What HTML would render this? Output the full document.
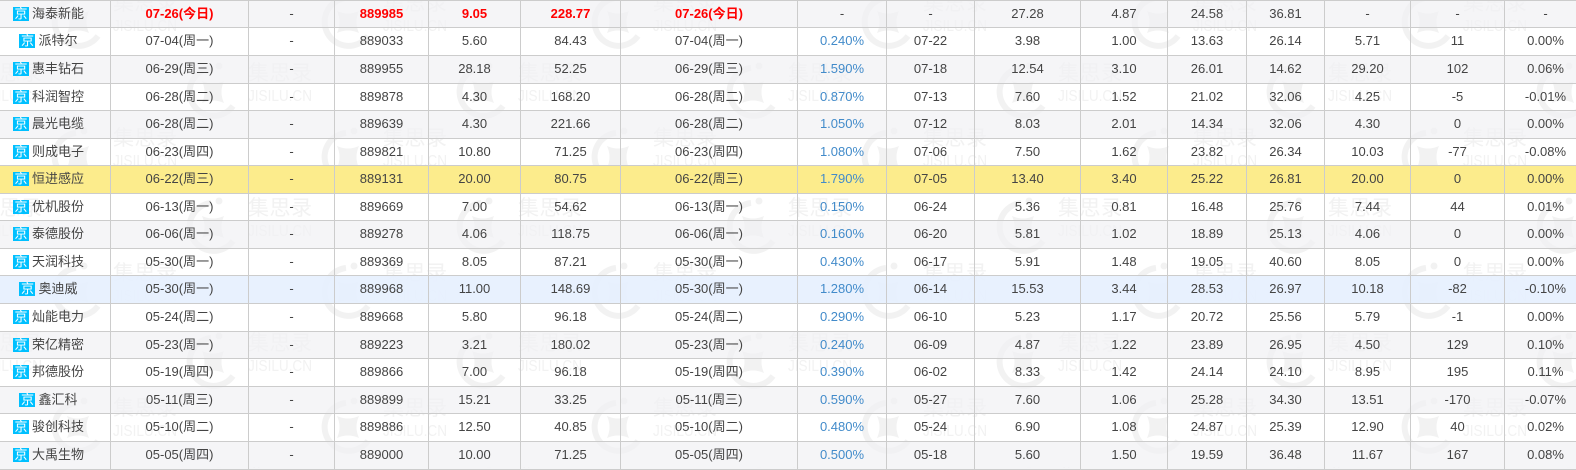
<!DOCTYPE html>
<html lang="zh-CN">
<head>
<meta charset="utf-8">
<title>集思录</title>
<style>
html,body{margin:0;padding:0;width:1576px;height:468px;overflow:hidden;background:#fff}
svg.wm{position:absolute;left:0;top:0;z-index:0}
table{position:absolute;left:-14px;top:0;z-index:1;width:1600px;border-collapse:collapse;table-layout:fixed;font-family:"Liberation Sans","Noto Sans CJK SC",sans-serif;font-size:13px;color:#444}
td{border:1px solid #ccc;padding:0 0 1px 0;text-align:center;white-space:nowrap;overflow:hidden;line-height:16px}
tr.g{background:rgba(241,241,244,.7)}
tr.y{background:#fcec8c}
tr.b{background:rgba(230,240,254,.92)}
tr.r td.h{color:#f00;font-weight:bold}
td.p{color:#428bca}
i{display:inline-block;width:16px;height:14px;line-height:14px;margin-right:3px;background:#00c0ff;color:#fff;font-style:normal;text-align:center;vertical-align:0}
</style>
</head>
<body>
<svg class="wm" width="1576" height="468" xmlns="http://www.w3.org/2000/svg">
<defs>
<pattern id="p" patternUnits="userSpaceOnUse" width="270" height="135" patternTransform="translate(45,-10)">
<g transform="translate(168,102)" fill="#f2f2f2" stroke="none">
<path d="M-2,-24 A24,24 0 1 0 20,14" fill="none" stroke="#f2f2f2" stroke-width="6"/>
<circle cx="6" cy="-26" r="3.5"/>
<path d="M-11,-11 Q0,-6 11,-11 Q6,0 11,11 Q0,6 -11,11 Q-6,0 -11,-11Z"/>
<text x="35" y="-12" font-family="'Noto Sans CJK SC',sans-serif" font-size="21" textLength="64">集思录</text>
<text x="35" y="9" font-family="'Liberation Sans',sans-serif" font-size="16" textLength="64" lengthAdjust="spacingAndGlyphs">JISILU.CN</text>
</g>
<g transform="translate(33,32)" fill="#f2f2f2" stroke="none">
<path d="M-2,-24 A24,24 0 1 0 20,14" fill="none" stroke="#f2f2f2" stroke-width="6"/>
<circle cx="6" cy="-26" r="3.5"/>
<path d="M-11,-11 Q0,-6 11,-11 Q6,0 11,11 Q0,6 -11,11 Q-6,0 -11,-11Z"/>
<text x="35" y="-12" font-family="'Noto Sans CJK SC',sans-serif" font-size="21" textLength="64">集思录</text>
<text x="35" y="9" font-family="'Liberation Sans',sans-serif" font-size="16" textLength="64" lengthAdjust="spacingAndGlyphs">JISILU.CN</text>
</g>
</pattern>
</defs>
<rect width="1576" height="468" fill="url(#p)"/>
</svg>
<table>
<colgroup>
<col style="width:124px"><col style="width:138px"><col style="width:86px"><col style="width:94px"><col style="width:92px"><col style="width:100px"><col style="width:177px"><col style="width:89px"><col style="width:88px"><col style="width:106px"><col style="width:87px"><col style="width:79px"><col style="width:78px"><col style="width:86px"><col style="width:94px"><col style="width:82px">
</colgroup>
<tr class="g r" style="height:27px"><td><i>京</i>海泰新能</td><td class="h">07-26(今日)</td><td>-</td><td class="h">889985</td><td class="h">9.05</td><td class="h">228.77</td><td class="h">07-26(今日)</td><td>-</td><td>-</td><td>27.28</td><td>4.87</td><td>24.58</td><td>36.81</td><td>-</td><td>-</td><td>-</td></tr>
<tr style="height:28px"><td><i>京</i>派特尔</td><td>07-04(周一)</td><td>-</td><td>889033</td><td>5.60</td><td>84.43</td><td>07-04(周一)</td><td class="p">0.240%</td><td>07-22</td><td>3.98</td><td>1.00</td><td>13.63</td><td>26.14</td><td>5.71</td><td>11</td><td>0.00%</td></tr>
<tr class="g" style="height:28px"><td><i>京</i>惠丰钻石</td><td>06-29(周三)</td><td>-</td><td>889955</td><td>28.18</td><td>52.25</td><td>06-29(周三)</td><td class="p">1.590%</td><td>07-18</td><td>12.54</td><td>3.10</td><td>26.01</td><td>14.62</td><td>29.20</td><td>102</td><td>0.06%</td></tr>
<tr style="height:27px"><td><i>京</i>科润智控</td><td>06-28(周二)</td><td>-</td><td>889878</td><td>4.30</td><td>168.20</td><td>06-28(周二)</td><td class="p">0.870%</td><td>07-13</td><td>7.60</td><td>1.52</td><td>21.02</td><td>32.06</td><td>4.25</td><td>-5</td><td>-0.01%</td></tr>
<tr class="g" style="height:28px"><td><i>京</i>晨光电缆</td><td>06-28(周二)</td><td>-</td><td>889639</td><td>4.30</td><td>221.66</td><td>06-28(周二)</td><td class="p">1.050%</td><td>07-12</td><td>8.03</td><td>2.01</td><td>14.34</td><td>32.06</td><td>4.30</td><td>0</td><td>0.00%</td></tr>
<tr style="height:27px"><td><i>京</i>则成电子</td><td>06-23(周四)</td><td>-</td><td>889821</td><td>10.80</td><td>71.25</td><td>06-23(周四)</td><td class="p">1.080%</td><td>07-06</td><td>7.50</td><td>1.62</td><td>23.82</td><td>26.34</td><td>10.03</td><td>-77</td><td>-0.08%</td></tr>
<tr class="y" style="height:28px"><td><i>京</i>恒进感应</td><td>06-22(周三)</td><td>-</td><td>889131</td><td>20.00</td><td>80.75</td><td>06-22(周三)</td><td class="p">1.790%</td><td>07-05</td><td>13.40</td><td>3.40</td><td>25.22</td><td>26.81</td><td>20.00</td><td>0</td><td>0.00%</td></tr>
<tr style="height:27px"><td><i>京</i>优机股份</td><td>06-13(周一)</td><td>-</td><td>889669</td><td>7.00</td><td>54.62</td><td>06-13(周一)</td><td class="p">0.150%</td><td>06-24</td><td>5.36</td><td>0.81</td><td>16.48</td><td>25.76</td><td>7.44</td><td>44</td><td>0.01%</td></tr>
<tr class="g" style="height:28px"><td><i>京</i>泰德股份</td><td>06-06(周一)</td><td>-</td><td>889278</td><td>4.06</td><td>118.75</td><td>06-06(周一)</td><td class="p">0.160%</td><td>06-20</td><td>5.81</td><td>1.02</td><td>18.89</td><td>25.13</td><td>4.06</td><td>0</td><td>0.00%</td></tr>
<tr style="height:27px"><td><i>京</i>天润科技</td><td>05-30(周一)</td><td>-</td><td>889369</td><td>8.05</td><td>87.21</td><td>05-30(周一)</td><td class="p">0.430%</td><td>06-17</td><td>5.91</td><td>1.48</td><td>19.05</td><td>40.60</td><td>8.05</td><td>0</td><td>0.00%</td></tr>
<tr class="b" style="height:28px"><td><i>京</i>奥迪威</td><td>05-30(周一)</td><td>-</td><td>889968</td><td>11.00</td><td>148.69</td><td>05-30(周一)</td><td class="p">1.280%</td><td>06-14</td><td>15.53</td><td>3.44</td><td>28.53</td><td>26.97</td><td>10.18</td><td>-82</td><td>-0.10%</td></tr>
<tr style="height:28px"><td><i>京</i>灿能电力</td><td>05-24(周二)</td><td>-</td><td>889668</td><td>5.80</td><td>96.18</td><td>05-24(周二)</td><td class="p">0.290%</td><td>06-10</td><td>5.23</td><td>1.17</td><td>20.72</td><td>25.56</td><td>5.79</td><td>-1</td><td>0.00%</td></tr>
<tr class="g" style="height:27px"><td><i>京</i>荣亿精密</td><td>05-23(周一)</td><td>-</td><td>889223</td><td>3.21</td><td>180.02</td><td>05-23(周一)</td><td class="p">0.240%</td><td>06-09</td><td>4.87</td><td>1.22</td><td>23.89</td><td>26.95</td><td>4.50</td><td>129</td><td>0.10%</td></tr>
<tr style="height:28px"><td><i>京</i>邦德股份</td><td>05-19(周四)</td><td>-</td><td>889866</td><td>7.00</td><td>96.18</td><td>05-19(周四)</td><td class="p">0.390%</td><td>06-02</td><td>8.33</td><td>1.42</td><td>24.14</td><td>24.10</td><td>8.95</td><td>195</td><td>0.11%</td></tr>
<tr class="g" style="height:27px"><td><i>京</i>鑫汇科</td><td>05-11(周三)</td><td>-</td><td>889899</td><td>15.21</td><td>33.25</td><td>05-11(周三)</td><td class="p">0.590%</td><td>05-27</td><td>7.60</td><td>1.06</td><td>25.28</td><td>34.30</td><td>13.51</td><td>-170</td><td>-0.07%</td></tr>
<tr style="height:28px"><td><i>京</i>骏创科技</td><td>05-10(周二)</td><td>-</td><td>889886</td><td>12.50</td><td>40.85</td><td>05-10(周二)</td><td class="p">0.480%</td><td>05-24</td><td>6.90</td><td>1.08</td><td>24.87</td><td>25.39</td><td>12.90</td><td>40</td><td>0.02%</td></tr>
<tr class="g" style="height:28px"><td><i>京</i>大禹生物</td><td>05-05(周四)</td><td>-</td><td>889000</td><td>10.00</td><td>71.25</td><td>05-05(周四)</td><td class="p">0.500%</td><td>05-18</td><td>5.60</td><td>1.50</td><td>19.59</td><td>36.48</td><td>11.67</td><td>167</td><td>0.08%</td></tr>
</table>
</body>
</html>
